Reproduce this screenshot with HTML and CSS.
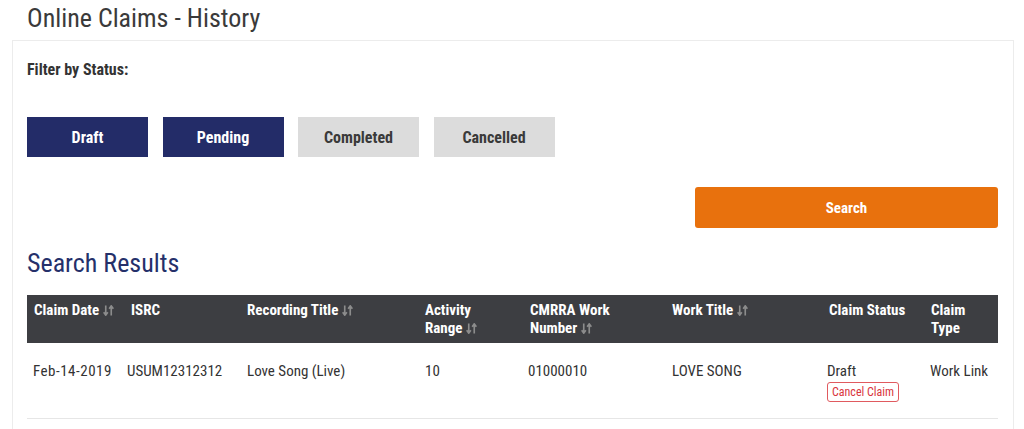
FILE: index.html
```html
<!DOCTYPE html>
<html>
<head>
<meta charset="utf-8">
<link rel="stylesheet" href="styles.css">
</head>
<body>
<div class="page">
  <h1 class="title">Online Claims - History</h1>
  <div class="card">
    <div class="filter-label">Filter by Status:</div>
    <div class="filters">
      <button class="fbtn active">Draft</button>
      <button class="fbtn active">Pending</button>
      <button class="fbtn">Completed</button>
      <button class="fbtn">Cancelled</button>
    </div>
    <div class="search-row">
      <button class="search-btn">Search</button>
    </div>
    <h2 class="results-title">Search Results</h2>
    <table class="results">
      <colgroup>
        <col style="width:97px"><col style="width:116px"><col style="width:178px"><col style="width:105px"><col style="width:142px"><col style="width:157px"><col style="width:102px"><col style="width:74px">
      </colgroup>
      <thead>
        <tr>
          <th>Claim Date <svg class="sort" viewBox="0 0 10 10"><path d="M2.5 0.5v8.5M0.6 6.6l1.9 2.6 1.9-2.6M7.5 9.5v-8.5M5.6 3.4l1.9-2.6 1.9 2.6"/></svg></th>
          <th>ISRC</th>
          <th>Recording Title <svg class="sort" viewBox="0 0 10 10"><path d="M2.5 0.5v8.5M0.6 6.6l1.9 2.6 1.9-2.6M7.5 9.5v-8.5M5.6 3.4l1.9-2.6 1.9 2.6"/></svg></th>
          <th>Activity<br>Range <svg class="sort" viewBox="0 0 10 10"><path d="M2.5 0.5v8.5M0.6 6.6l1.9 2.6 1.9-2.6M7.5 9.5v-8.5M5.6 3.4l1.9-2.6 1.9 2.6"/></svg></th>
          <th>CMRRA Work<br>Number <svg class="sort" viewBox="0 0 10 10"><path d="M2.5 0.5v8.5M0.6 6.6l1.9 2.6 1.9-2.6M7.5 9.5v-8.5M5.6 3.4l1.9-2.6 1.9 2.6"/></svg></th>
          <th>Work Title <svg class="sort" viewBox="0 0 10 10"><path d="M2.5 0.5v8.5M0.6 6.6l1.9 2.6 1.9-2.6M7.5 9.5v-8.5M5.6 3.4l1.9-2.6 1.9 2.6"/></svg></th>
          <th>Claim Status</th>
          <th>Claim<br>Type</th>
        </tr>
      </thead>
      <tbody>
        <tr>
          <td class="date-d">Feb-14-2019</td>
          <td class="isrc-d">USUM12312312</td>
          <td>Love Song (Live)</td>
          <td>10</td>
          <td class="num-d">01000010</td>
          <td>LOVE SONG</td>
          <td class="status">Draft<br><span class="cancel">Cancel Claim</span></td>
          <td class="type-d">Work Link</td>
        </tr>
      </tbody>
    </table>
  </div>
</div>
</body>
</html>
```

FILE: styles.css
```css
* { box-sizing: border-box; }
html, body { margin: 0; padding: 0; background: #fff; }
body {
  font-family: "Roboto Condensed", "Liberation Sans Narrow", Roboto, sans-serif;
  font-stretch: 75%;
  color: #333;
}
.page { padding: 0 10px 0 12px; }
.title {
  margin: 0;
  padding: 3px 0 0 15px;
  height: 40px;
  font-size: 26px;
  font-weight: 400;
  line-height: 30px;
  color: #3a3a3a;
}
.card {
  border: 1px solid #ececec;
  border-bottom: none;
  padding: 19px 15px 0 14px;
  height: 400px;
}
.filter-label {
  font-size: 16px;
  font-weight: 700;
  line-height: 20px;
  color: #333;
}
.filters {
  display: flex;
  gap: 14.5px;
  margin-top: 37px;
}
.fbtn {
  width: 121px;
  height: 40px;
  border: none;
  background: #dcdcdc;
  color: #3a3a3a;
  font-family: inherit;
  font-stretch: inherit;
  font-size: 16px;
  font-weight: 700;
  padding: 0;
}
.fbtn.active { background: #232c68; color: #fff; }
.search-row {
  display: flex;
  justify-content: flex-end;
  margin-top: 30px;
}
.search-btn {
  width: 303px;
  height: 41px;
  border: none;
  border-radius: 3px;
  background: #e8710d;
  color: #fff;
  font-family: inherit;
  font-stretch: inherit;
  font-size: 15px;
  font-weight: 700;
}
.results-title {
  margin: 20px 0 0;
  font-size: 26px;
  font-weight: 400;
  line-height: 30px;
  color: #25306a;
  height: 47px;
}
.results {
  border-collapse: collapse;
  table-layout: fixed;
  width: 971px;
}
.results th {
  background: #3d3e42;
  color: #fff;
  text-align: left;
  vertical-align: top;
  font-size: 15px;
  font-weight: 700;
  line-height: 18px;
  padding: 6px 7px 6px 7px;
  height: 48px;
}
.sort {
  width: 11px;
  height: 11px;
  fill: none;
  stroke: #8c8c8c;
  stroke-width: 1.5;
  vertical-align: -1px;
}
.results td {
  font-size: 15px;
  line-height: 18px;
  color: #333;
  padding: 19px 7px 15px 7px;
  height: 75px;
  vertical-align: top;
  border-bottom: 1px solid #e6e6e6;
  white-space: nowrap;
}
.results td.date-d { padding-left: 6px; letter-spacing: 0.5px; }
.results td.isrc-d { padding-left: 3px; }
.results td.num-d { padding-left: 5px; }
.results td.status { padding-left: 5px; }
.results td.type-d { padding-left: 6px; }
.cancel {
  display: inline-block;
  margin-top: 2px;
  border: 1px solid #e05a5f;
  border-radius: 3px;
  color: #d9363e;
  font-size: 12px;
  line-height: 18px;
  padding: 0 4px;
}
```
